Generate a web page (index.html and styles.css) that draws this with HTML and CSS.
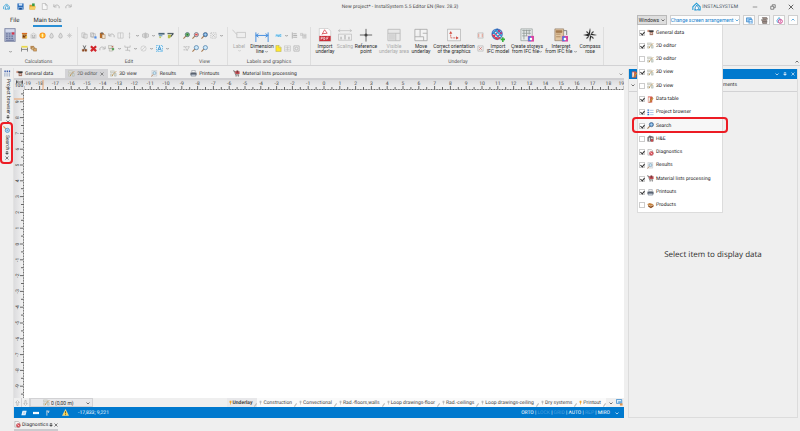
FILE: index.html
```html
<!DOCTYPE html>
<html lang="en">
<head>
<meta charset="utf-8">
<title>New project* - InstalSystem 5.5 Editor EN (Rev. 28.3)</title>
<link rel="stylesheet" href="styles.css">
</head>
<body>
<svg class="defs" aria-hidden="true">
  <symbol id="logo" viewBox="0 0 16 16"><path d="M1.500 14V8.500L8 2l6.500 6.500V14H11M4 14h3" fill="none" stroke="#1b9ad6" stroke-width="1.800"/><path d="M8.500 5.500C11 9 11.500 10 11.500 11.300a3 3 0 0 1-6 0C5.500 10 7 8 8.500 5.500z" fill="#fff" stroke="#1b86c8" stroke-width="1.600"/></symbol>
  <symbol id="save" viewBox="0 0 16 16"><path d="M1 1h14v14H1z" fill="#2568b8"/><path d="M4 1h8v5H4z" fill="#cfe3f8"/><path d="M3 9h10v6H3z" fill="#8eb5e0"/><path d="M5 11h6v4H5z" fill="#174a8c"/></symbol>
  <symbol id="open" viewBox="0 0 16 16"><path d="M1 4h5l1 2h7v9H1z" fill="#d99a2b"/><path d="M3 8h13l-3 7H1z" fill="#f7cf62"/><path d="M7 1h6v6H7z" fill="#3d9b45"/></symbol>
  <symbol id="page" viewBox="0 0 16 16"><path d="M3 1h7l4 4v10H3zM10 1v4h4" fill="#f8f8f8" stroke="#aaa" stroke-width="1.300"/></symbol>
  <symbol id="undo" viewBox="0 0 16 16"><path d="M2 3v6h6M2.500 8.500C5 4 12 3 14 8v4" fill="none" stroke="#b5b5b5" stroke-width="2.200"/></symbol>
  <symbol id="redo" viewBox="0 0 16 16"><path d="M14 3v6H8M13.500 8.500C11 4 4 3 2 8v4" fill="none" stroke="#b5b5b5" stroke-width="2.200"/></symbol>
  <symbol id="calc" viewBox="0 0 26 32"><path d="M1 1h24v30H1z" fill="#a9b2cc" stroke="#747d9c" stroke-width="1.500"/><path d="M3 3h20v6H3z" fill="#d3d9ec"/><path d="M4 12h4v3H4zm6 0h4v3h-4zM4 17h4v3H4zm6 0h4v3h-4zm6 0h4v3h-4zM4 22h4v3H4zm6 0h4v3h-4zm6 0h4v3h-4zM4 27h18v2H4z" fill="#69749c"/><path d="M17 10h6v5h-6z" fill="#d8344a"/></symbol>
  <symbol id="boiler" viewBox="0 0 16 16"><path d="M2 2h12v3H2z" fill="#d86a22"/><path d="M3 5h10v10H3z" fill="#b87d2c"/><path d="M5 7l3 3 4-4v6H4z" fill="#6b2e16"/><path d="M10 9h4v5h-4z" fill="#edc14a"/></symbol>
  <symbol id="house" viewBox="0 0 16 16"><path d="M2 14V6l6-4 6 4v8z" fill="#e3e3e3" stroke="#bbb"/><path d="M4 7h3v3H4zm5 0h3v3H9zM5 11h6v3H5z" fill="#b5b5b5"/></symbol>
  <symbol id="sun" viewBox="0 0 16 16"><circle cx="8" cy="8" r="7" fill="#f8931e"/><circle cx="8" cy="8" r="4.500" fill="#ffcc43"/><path d="M7 4h2v8H7z" fill="#fff3cf"/></symbol>
  <symbol id="drop" viewBox="0 0 16 16"><path d="M8 2c3 4 4 6 4 8a4 4 0 0 1-8 0c0-2 2-4 4-8z" fill="#ddd" stroke="#aaa" stroke-width="1.500"/></symbol>
  <symbol id="snow" viewBox="0 0 16 16"><path d="M8 2v12M2 8h12M4 4l8 8M12 4l-8 8" stroke="#c3c3c3" stroke-width="1.500"/></symbol>
  <symbol id="radiator" viewBox="0 0 16 16"><path d="M1 2h14v4H1z" fill="#e9d84a"/><path d="M1 6v9M15 6v9M1 10h14" stroke="#777" stroke-width="2"/></symbol>
  <symbol id="stack" viewBox="0 0 16 16"><path d="M1 2h8v7H1z" fill="#b98a55"/><path d="M4 5h7v6H4z" fill="#e3c089" stroke="#8f6437"/><path d="M8 8h7v6H8z" fill="#d9a461" stroke="#8f6437"/></symbol>
  <symbol id="copy" viewBox="0 0 16 16"><path d="M2 2h7v10H2zM6 5h8v9H6z" fill="#eee" stroke="#b0b0b0" stroke-width="1.400"/></symbol>
  <symbol id="copyb" viewBox="0 0 16 16"><path d="M1 2h7v9H1zM4 4h8v8H4z" fill="#eee" stroke="#a9a9a9" stroke-width="1.400"/><path d="M10 10h5v5h-5z" fill="#4f8de8"/></symbol>
  <symbol id="paste" viewBox="0 0 16 16"><path d="M2 2h9v12H2z" fill="#b96d28"/><path d="M4 1h5v3H4z" fill="#666"/><path d="M7 6h7v9H7z" fill="#f4e5cf" stroke="#8c6b4a"/></symbol>
  <symbol id="split" viewBox="0 0 16 16"><path d="M2 2h12v12H2zM8 2v12" fill="none" stroke="#c0c0c0" stroke-width="1.500"/></symbol>
  <symbol id="vline" viewBox="0 0 16 16"><path d="M8 1v14M6 5l2-2 2 2M6 11l2 2 2-2" fill="none" stroke="#b5b5b5" stroke-width="1.300"/></symbol>
  <symbol id="mirror" viewBox="0 0 16 16"><path d="M6 3L1 5v6l5 2zM10 3l5 2v6l-5 2z" fill="#ddd" stroke="#999"/><path d="M8 1v14" stroke="#aaa" stroke-width="1.500"/></symbol>
  <symbol id="brush" viewBox="0 0 16 16"><path d="M1 2h14v4H1z" fill="#4d6778"/><path d="M2 6h8v4H2z" fill="#7ea7c2"/><path d="M3 10h4v4H3z" fill="#c0cb63"/></symbol>
  <symbol id="brush2" viewBox="0 0 16 16"><path d="M1 2h14v3H1z" fill="#59666b"/><path d="M14 4L8 11" stroke="#39444b" stroke-width="2.500"/><path d="M2 6h8l-3 8H2z" fill="#b8bd4b"/></symbol>
  <symbol id="cut" viewBox="0 0 16 16"><path d="M5 1l5 10M11 1L6 11" stroke="#4b4b4b" stroke-width="1.800"/><path d="M3 10h4v4H3zm6 0h4v4H9z" fill="#8a461e" stroke="#8a461e"/></symbol>
  <symbol id="delete" viewBox="0 0 16 16"><path d="M2 3l12 11M14 3L2 14" stroke="#d1252b" stroke-width="5"/></symbol>
  <symbol id="layers" viewBox="0 0 16 16"><path d="M1 1h8v7H1zM3 8h7v6H3z" fill="#e6e6d8" stroke="#9a9a9a"/><path d="M9 7h5v5H9z" fill="#59a05a"/><path d="M8 4l4-3v6z" fill="#b86a52"/></symbol>
  <symbol id="align" viewBox="0 0 16 16"><path d="M2 1v4h12V1M8 5v7M3 12h10v3" fill="none" stroke="#ababab" stroke-width="1.500"/></symbol>
  <symbol id="slash" viewBox="0 0 16 16"><circle cx="8" cy="8" r="6" fill="none" stroke="#c4c4c4" stroke-width="1.500"/><path d="M4 12l8-8" stroke="#c4c4c4" stroke-width="1.500"/></symbol>
  <symbol id="select-a" viewBox="0 0 16 16"><path d="M1 1h14v14H1z" fill="#e3f3fd" stroke="#3ca4dd" stroke-width="1.600" stroke-dasharray="3 2"/><path d="M4 13l4-10 4 10M6 10h4" fill="none" stroke="#217fc0" stroke-width="1.800"/></symbol>
  <symbol id="zoom-green" viewBox="0 0 16 16"><path d="M7 9l-6 6" stroke="#a77a51" stroke-width="2.500"/><circle cx="10" cy="6" r="4.800" fill="#77bd69" stroke="#49677d" stroke-width="1.600"/><path d="M8 6h4M10 4v4" stroke="#14652d" stroke-width="1.500"/></symbol>
  <symbol id="zoom-red" viewBox="0 0 16 16"><path d="M7 9l-6 6" stroke="#a77a51" stroke-width="2.500"/><circle cx="10" cy="6" r="4.800" fill="#f3b5ad" stroke="#576d86" stroke-width="1.600"/><path d="M7.500 6h5" stroke="#d5252f" stroke-width="2"/></symbol>
  <symbol id="zoom-blue" viewBox="0 0 16 16"><path d="M7 9l-6 6" stroke="#a77a51" stroke-width="2.500"/><circle cx="10" cy="6" r="4.800" fill="#cbe8fb" stroke="#5180a8" stroke-width="1.700"/></symbol>
  <symbol id="zoom-dark" viewBox="0 0 16 16"><path d="M7 9l-6 6" stroke="#a77a51" stroke-width="2.500"/><circle cx="10" cy="6" r="4.800" fill="#5495cf" stroke="#4d6685" stroke-width="1.600"/><path d="M10 3v6M7 6h6" stroke="#eaf5ff"/></symbol>
  <symbol id="zoom-v" viewBox="0 0 16 16"><path d="M7 7L1 1" stroke="#e09a4a" stroke-width="2.500"/><circle cx="10" cy="10" r="4.800" fill="#bfe0f7" stroke="#4c8ac0" stroke-width="1.800"/><path d="M10 8v4M8 10h4" stroke="#3c7cb8"/></symbol>
  <symbol id="frame" viewBox="0 0 16 16"><path d="M2 2h12v12H2z" fill="none" stroke="#b0b0b0" stroke-width="1.600" stroke-dasharray="3 2"/><path d="M5 5l6 6M11 5l-6 6" stroke="#b0b0b0" stroke-width="1.300"/></symbol>
  <symbol id="scissor-g" viewBox="0 0 16 16"><path d="M1 4h14M1 11h6M9 13l5-8M5 5l5 8" fill="none" stroke="#aaa" stroke-width="1.600" stroke-dasharray="4 1"/></symbol>
  <symbol id="label" viewBox="0 0 32 32"><path d="M1 4l10 11M11 10h20v12H11z" fill="#eee" stroke="#b8b8b8" stroke-width="1.500"/></symbol>
  <symbol id="dimension" viewBox="0 0 32 32"><path d="M2 10v22M30 10v22M2 17h28M8 13l-6 4 6 4M24 13l6 4-6 4" fill="none" stroke="#458fdf" stroke-width="2.200"/></symbol>
  <symbol id="abc" viewBox="0 0 16 16"><path d="M1 5h14v6H1z" fill="#bfe5fa"/><path d="M2 10l2-4 2 4M7 6v4h2V7M14 6h-3v4h3" fill="none" stroke="#319fd7" stroke-width="1.200"/></symbol>
  <symbol id="list-g" viewBox="0 0 16 16"><path d="M3 1v14M5 4h8M5 8h9M5 12h9" stroke="#aaa" stroke-width="2"/></symbol>
  <symbol id="doc-g" viewBox="0 0 16 16"><path d="M1 3h5v5H1zM6 5h8v9H6z" fill="#ddd" stroke="#bbb"/><path d="M8 8h5M8 11h5" stroke="#aaa"/></symbol>
  <symbol id="note" viewBox="0 0 16 16"><path d="M2 1h7l5 5v9H2z" fill="#ffe72d" stroke="#a3a05a"/><path d="M9 1v5h5" fill="#fff8a2" stroke="#a3a05a"/></symbol>
  <symbol id="table-g" viewBox="0 0 16 16"><path d="M1 2h14v12H1zM3 6h10M3 10h10M8 3v10" fill="#eee" stroke="#bbb" stroke-width="1.300"/></symbol>
  <symbol id="pic-g" viewBox="0 0 16 16"><path d="M2 2h12v12H2z" fill="#eee" stroke="#aaa" stroke-width="1.500"/><circle cx="8" cy="8" r="3" fill="none" stroke="#aaa" stroke-width="1.500"/></symbol>
  <symbol id="pdf" viewBox="0 0 32 32"><path d="M3 1h20l6 6v24H3z" fill="#fff" stroke="#aaa"/><path d="M3 18h26v12H3z" fill="#c92d38"/><path d="M9 15l6-11 6 8-11 1" fill="none" stroke="#d8434c" stroke-width="1.800"/><path d="M7 27v-6h3v3H7M13 21v6l3-1v-4zM20 27v-6h4M20 24h3" fill="none" stroke="#fff" stroke-width="1.300"/></symbol>
  <symbol id="scaling" viewBox="0 0 32 32"><path d="M1 6h30M5 3L1 6l4 3M27 3l4 3-4 3M1 14h30v14H1z" fill="none" stroke="#b7b7b7" stroke-width="1.500"/><path d="M5 20h4v6H5zm9-4h4v10h-4zm9 4h4v6h-4z" fill="#c6c6c6"/></symbol>
  <symbol id="refpoint" viewBox="0 0 32 32"><path d="M16 2v29M2 16h28" stroke="#555" stroke-width="2"/><circle cx="16" cy="16" r="3.500" fill="#444"/></symbol>
  <symbol id="visible" viewBox="0 0 32 32"><path d="M2 3h28v26H2zM2 12h28M20 12v17" fill="#e8e8e8" stroke="#bcbcbc" stroke-width="2"/><path d="M4 14h14v13H4z" fill="#d4d4d4"/></symbol>
  <symbol id="move" viewBox="0 0 32 32"><path d="M2 3h28v26H2zM2 20h12V3M20 12h10M14 20h8v9" fill="#f3f3f3" stroke="#a3a3a3" stroke-width="1.800"/></symbol>
  <symbol id="correct" viewBox="0 0 34 32"><path d="M1 2h32v28H1z" fill="#f3f3f3" stroke="#a3a3a3" stroke-width="1.500"/><path d="M9 8v15h18" fill="none" stroke="#d35248" stroke-width="2" stroke-dasharray="5 2"/><path d="M5 13l4-6 4 6zM22 19l6 4-6 4z" fill="#d35248"/></symbol>
  <symbol id="fit" viewBox="0 0 16 16"><path d="M2 2h12v12H2z" fill="#eee" stroke="#9a9a9a"/><path d="M4 4v8M12 4v8" stroke="#e69384" stroke-width="2"/></symbol>
  <symbol id="fitx" viewBox="0 0 16 16"><path d="M2 2h12v12H2z" fill="#eee" stroke="#9a9a9a"/><path d="M5 5l6 6M11 5l-6 6" stroke="#d0645b" stroke-width="1.500"/></symbol>
  <symbol id="ifc" viewBox="0 0 32 32"><g fill="none" stroke-width="3"><circle cx="14" cy="14" r="11.500" stroke="#4a7cc6"/><path d="M3 14L14 3l11 11" stroke="#2c5eb0"/><path d="M5 20L20 5M10 25L25 10" stroke="#db2b70"/><path d="M5 9l16 15M10 4l14 15" stroke="#2b9bd7"/><path d="M3 15l11 11 7-5" stroke="#d8394d"/></g><path d="M27 21v11M22 26h10" stroke="#35ae3a" stroke-width="3.500"/></symbol>
  <symbol id="storeys" viewBox="0 0 32 32"><path d="M2 2h26v27H2z" fill="#e8eceb" stroke="#8c9792" stroke-width="1.500"/><path d="M5 6h20M5 12h20M5 18h12M9 4v22M15 4v14M21 4v11" stroke="#8d9894" stroke-width="1.800"/><path d="M18 18h14v13H18z" fill="#d846a2"/><path d="M19 19h6v11h-6z" fill="#427ee0"/><circle cx="25" cy="25" r="3" fill="#fff"/></symbol>
  <symbol id="interpret" viewBox="0 0 32 32"><path d="M2 2h20v27H2z" fill="#e2c5a0" stroke="#8c7961" stroke-width="1.500"/><path d="M5 6h13v4H5zM5 14h10M5 20h10" fill="#aa7e50" stroke="#9a7248" stroke-width="1.500"/><path d="M22 6h7v10" fill="none" stroke="#777" stroke-width="2"/><path d="M18 18h14v13H18z" fill="#d846a2"/><path d="M19 19h6v11h-6z" fill="#427ee0"/><circle cx="25" cy="25" r="3" fill="#fff"/></symbol>
  <symbol id="compass" viewBox="0 0 32 32"><path d="M16 0l3 13 13 3-13 3-3 13-3-13-13-3 13-3z" fill="#222"/><path d="M8 8l16 16M24 8L8 24" stroke="#444" stroke-width="2.500"/><path d="M16 16l3-3L16 2zM16 16l3 3 11-3zM16 16l-3 3 3 11z" fill="#d5d5d5"/></symbol>
  <symbol id="pencil-tree" viewBox="0 0 16 16"><path d="M1 2h9v4H1zM1 9h4v5H1z" fill="#e1e2da" stroke="#aeb0a5"/><path d="M14 3L7 10l-2 4" fill="none" stroke="#bb9350" stroke-width="2"/><path d="M10 8h4v6h-4z" fill="#d8dfd9" stroke="#9aa69d"/></symbol>
  <symbol id="general" viewBox="0 0 16 16"><path d="M1 2h5v5H1z" fill="#c78e7a"/><path d="M5 3h10v4H5z" fill="#373737"/><path d="M6 7h8v7H6z" fill="#a67868"/><path d="M8 9h4v2H8z" fill="#e5d9d4"/></symbol>
  <symbol id="datatable" viewBox="0 0 16 16"><path d="M2 1h10v14H2z" fill="#d85c50"/><path d="M3 3h4v11H3z" fill="#f2eee8"/><path d="M14 5l-5 8-3 2 1-4 5-8z" fill="#e6a03c" stroke="#8d5b35"/></symbol>
  <symbol id="browser" viewBox="0 0 16 16"><path d="M1 1h4v3H1zm0 5h4v3H1zm0 5h4v3H1z" fill="#3776c9"/><path d="M7 3h8M7 8h8M7 13h8" stroke="#9ab9df" stroke-width="1.800"/></symbol>
  <symbol id="browser-v" viewBox="0 0 16 16"><path d="M1 1h3v4H1zm5 0h3v4H6zm5 0h3v4h-3z" fill="#3457a8"/><path d="M2 7v8M7 7v8M12 7v8" stroke="#8298bd" stroke-width="1.800"/></symbol>
  <symbol id="he" viewBox="0 0 16 16"><path d="M1 5l5-4 9 3v11H1z" fill="#6c686b"/><path d="M4 6h3v8H4zm5 0h4v3H9z" fill="#ddd"/><path d="M9 10h5v5H9z" fill="#c9484c"/></symbol>
  <symbol id="diag" viewBox="0 0 16 16"><path d="M2 1h8l3 3v10H2z" fill="#f7f7f7" stroke="#888"/><circle cx="10" cy="10" r="4.500" fill="#de5861" stroke="#a83942"/><path d="M8 8l4 4" stroke="#fff" stroke-width="1.500"/></symbol>
  <symbol id="results" viewBox="0 0 16 16"><path d="M2 1h11v13H2z" fill="#e9edf0" stroke="#b7bcc1"/><circle cx="8" cy="7" r="3.500" fill="#c8e6f7" stroke="#7597ac" stroke-width="1.300"/><path d="M5 10l-4 5" stroke="#b98764" stroke-width="2"/></symbol>
  <symbol id="cart" viewBox="0 0 16 16"><path d="M0 2h3l3 9h8" fill="none" stroke="#555" stroke-width="1.600"/><path d="M4 3h11v6H6z" fill="#bd4c52"/><path d="M6 12h2v3H6zm5 0h2v3h-2z" fill="#555"/><path d="M8 1h4v5H8z" fill="#7c3438"/></symbol>
  <symbol id="printer" viewBox="0 0 16 16"><path d="M4 1h8v5H4z" fill="#f3f3f3" stroke="#747b88"/><path d="M1 6h14v6H1z" fill="#596270"/><path d="M3 10h10v4H3z" fill="#ced6e2" stroke="#596270"/></symbol>
  <symbol id="products" viewBox="0 0 16 16"><path d="M0 5l6-3 9 3-6 4z" fill="#c5833e"/><path d="M2 7l7 3 6-4v4l-6 4-6-3z" fill="#8e4e1d"/></symbol>
  <symbol id="chev" viewBox="0 0 8 8"><path d="M1 3l3 3 3-3" fill="none" stroke="currentColor" stroke-width="1.300"/></symbol>
  <symbol id="close" viewBox="0 0 8 8"><path d="M1 1l6 6M7 1L1 7" stroke="currentColor" stroke-width="1.200"/></symbol>
  <symbol id="pin" viewBox="0 0 8 8"><path d="M2.500 1h3v4h-3zM1 5h6M4 5v3" fill="none" stroke="currentColor" stroke-width="1.100"/></symbol>
  <symbol id="monitor" viewBox="0 0 16 16"><path d="M1 2h11v9H1z" fill="#9fcdf2" stroke="#2677bd" stroke-width="1.500"/><path d="M6 5h9v10H6z" fill="#4b96d8"/><path d="M8 7h5v3H8zM8 12h5v3H8z" fill="#e8f4ff"/></symbol>
  <symbol id="books" viewBox="0 0 16 16"><path d="M3 1h10l2 4H5zM1 6h11l2 4H3zM3 11h10v4H4z" fill="#a7958d" stroke="#655c58" stroke-width="1.300"/></symbol>
  <symbol id="drops" viewBox="0 0 16 16"><path d="M7 1l4 6-2 6-6-1-1-4z" fill="#d9effc" stroke="#2895cf" stroke-width="1.500"/><circle cx="10" cy="10" r="4.500" fill="#fff" stroke="#cd3688" stroke-width="2"/><path d="M10 7v6" stroke="#cd3688" stroke-width="1.500"/></symbol>
  <symbol id="bulb" viewBox="0 0 8 12"><path d="M2 1h4l1 4-2 2v4H3V7L1 5z" fill="currentColor"/></symbol>
  <symbol id="arrow" viewBox="0 0 8 10"><path d="M4 1l3 3H5v5H3V4H1z" fill="#fff" stroke="#999" stroke-width=".9"/></symbol>
  <symbol id="warn" viewBox="0 0 16 16"><path d="M8 1l7 14H1z" fill="#ffd24c" stroke="#fff0b5"/><path d="M8 5v5M8 12v2" stroke="#5b430b" stroke-width="1.800"/></symbol>
  <symbol id="st-page" viewBox="0 0 16 16"><path d="M4 2h11l-3 12H1z" fill="#f0f7fd"/><path d="M6 6h6M5 10h6" stroke="#7db4df" stroke-width="1.500"/></symbol>
  <symbol id="st-bar" viewBox="0 0 16 16"><path d="M0 5h16v6H0z" fill="#fff"/><path d="M3 8h10" stroke="#bfdcf2"/></symbol>
  <symbol id="st-key" viewBox="0 0 16 16"><path d="M5 1v14M5 3h4v5M9 3h3" fill="none" stroke="#c7d5df" stroke-width="2.500"/></symbol>
  <symbol id="screens" viewBox="0 0 16 16"><path d="M1 1h12v9H1z" fill="#d9efff" stroke="#3a87c8" stroke-width="1.800"/><path d="M5 5h9v6H5z" fill="#6faee0"/><path d="M9 10h6v5H9z" fill="#e0954d"/></symbol>
</svg>

<header>
  <div class="titlebar">
    <nav class="quick">
      <svg class="ic"><use href="#logo"/></svg>
      <button class="qb" aria-label="Save"><svg class="ic"><use href="#save"/></svg></button>
      <button class="qb" aria-label="Open"><svg class="ic"><use href="#open"/></svg></button>
      <button class="qb" aria-label="New"><svg class="ic"><use href="#page"/></svg></button>
      <button class="qb" aria-label="Undo"><svg class="ic"><use href="#undo"/></svg></button>
      <button class="qb" aria-label="Redo"><svg class="ic"><use href="#redo"/></svg></button>
    </nav>
    <h1>New project* - InstalSystem 5.5 Editor EN (Rev. 28.3)</h1>
    <div class="winbar">
      <svg class="brand-logo"><use href="#logo"/></svg><span class="brand">INSTALSYSTEM</span>
      <button aria-label="Minimize"><svg viewBox="0 0 8 8"><path d="M1 4h6" stroke="#777"/></svg></button>
      <button aria-label="Restore"><svg viewBox="0 0 8 8"><path d="M1 3h4v4H1zM3 3V1h4v4H5" fill="none" stroke="#666"/></svg></button>
      <button aria-label="Close"><svg><use href="#close"/></svg></button>
    </div>
  </div>

  <div class="tabrow">
    <a class="rtab" href="#file">File</a>
    <a class="rtab on" href="#main">Main tools</a>
    <div class="rowtools">
      <div class="menu-wrap">
        <button class="drop grey">Windows <svg class="cv"><use href="#chev"/></svg></button>
        <div class="menu">
          <label><input type="checkbox" checked><svg class="ic"><use href="#general"/></svg>General data</label>
          <label><input type="checkbox" checked><svg class="ic"><use href="#pencil-tree"/></svg>2D editor</label>
          <label><input type="checkbox"><svg class="ic"><use href="#pencil-tree"/></svg>2D editor</label>
          <label><input type="checkbox" checked><svg class="ic"><use href="#pencil-tree"/></svg>3D view</label>
          <label><input type="checkbox"><svg class="ic"><use href="#pencil-tree"/></svg>3D view</label>
          <label><input type="checkbox" checked><svg class="ic"><use href="#datatable"/></svg>Data table</label>
          <label><input type="checkbox" checked><svg class="ic"><use href="#browser"/></svg>Project browser</label>
          <label class="hot"><input type="checkbox" checked><svg class="ic"><use href="#zoom-dark"/></svg>Search</label>
          <label><input type="checkbox"><svg class="ic"><use href="#he"/></svg>H&amp;E</label>
          <label><input type="checkbox" checked><svg class="ic"><use href="#diag"/></svg>Diagnostics</label>
          <label><input type="checkbox" checked><svg class="ic"><use href="#results"/></svg>Results</label>
          <label><input type="checkbox" checked><svg class="ic"><use href="#cart"/></svg>Material lists processing</label>
          <label><input type="checkbox" checked><svg class="ic"><use href="#printer"/></svg>Printouts</label>
          <label><input type="checkbox"><svg class="ic"><use href="#products"/></svg>Products</label>
        </div>
      </div>
      <button class="drop blue">Change screen arrangement <svg class="cv"><use href="#chev"/></svg></button>
      <button class="sq" aria-label="Screens"><svg class="ic"><use href="#monitor"/></svg></button>
      <button class="sq" aria-label="Catalogues"><svg class="ic"><use href="#books"/></svg></button>
      <button class="sq" aria-label="Media"><svg class="ic"><use href="#drops"/></svg></button>
      <button class="sq last" aria-label="Collapse"><svg class="cv up"><use href="#chev"/></svg></button>
    </div>
  </div>

  <div class="ribbon">
    <section class="group g-calc">
      <div class="tools">
        <button class="tool w20" aria-label="Calculate"><svg class="big"><use href="#calc"/></svg><svg class="cv low"><use href="#chev"/></svg></button>
        <div class="small">
          <div><svg><use href="#boiler"/></svg><svg><use href="#house"/></svg><svg><use href="#sun"/></svg><svg><use href="#drop"/></svg><svg><use href="#drop"/></svg><svg><use href="#snow"/></svg></div>
          <div><svg><use href="#radiator"/></svg><svg><use href="#stack"/></svg></div>
        </div>
      </div>
      <h2>Calculations</h2>
    </section>
    <section class="group g-edit">
      <div class="tools">
        <div class="small">
          <div><svg><use href="#copy"/></svg><svg><use href="#copyb"/></svg><svg><use href="#paste"/></svg><svg><use href="#undo"/></svg><svg><use href="#split"/></svg><svg><use href="#vline"/></svg><svg class="c"><use href="#chev"/></svg><svg><use href="#mirror"/></svg><svg class="c"><use href="#chev"/></svg><svg><use href="#brush"/></svg><svg><use href="#brush2"/></svg></div>
          <div><svg><use href="#cut"/></svg><svg><use href="#delete"/></svg><svg><use href="#redo"/></svg><svg><use href="#layers"/></svg><svg class="c"><use href="#chev"/></svg><svg><use href="#align"/></svg><svg class="c"><use href="#chev"/></svg><svg><use href="#slash"/></svg><svg class="c"><use href="#chev"/></svg><svg><use href="#select-a"/></svg><svg class="c"><use href="#chev"/></svg></div>
        </div>
      </div>
      <h2>Edit</h2>
    </section>
    <section class="group g-view">
      <div class="tools">
        <div class="small">
          <div><svg><use href="#zoom-green"/></svg><svg><use href="#zoom-red"/></svg><svg><use href="#zoom-dark"/></svg><svg><use href="#frame"/></svg><svg class="c"><use href="#chev"/></svg></div>
          <div><svg><use href="#scissor-g"/></svg><svg><use href="#zoom-blue"/></svg><svg><use href="#zoom-blue"/></svg></div>
        </div>
      </div>
      <h2>View</h2>
    </section>
    <section class="group g-label">
      <div class="tools">
        <button class="tool w22 off"><svg class="big"><use href="#label"/></svg><span>Label</span><svg class="cv"><use href="#chev"/></svg></button>
        <button class="tool w24"><svg class="big"><use href="#dimension"/></svg><span>Dimension<br>line <svg class="cv"><use href="#chev"/></svg></span></button>
        <div class="small">
          <div><svg><use href="#abc"/></svg><svg class="c"><use href="#chev"/></svg><svg><use href="#list-g"/></svg><svg><use href="#doc-g"/></svg></div>
          <div><svg><use href="#note"/></svg><svg><use href="#table-g"/></svg><svg><use href="#pic-g"/></svg></div>
        </div>
      </div>
      <h2>Labels and graphics</h2>
    </section>
    <section class="group g-under">
      <div class="tools">
        <button class="tool w24"><svg class="big"><use href="#pdf"/></svg><span>Import<br>underlay</span></button>
        <button class="tool w16 off"><svg class="big"><use href="#scaling"/></svg><span>Scaling</span></button>
        <button class="tool w26"><svg class="big"><use href="#refpoint"/></svg><span>Reference<br>point</span></button>
        <button class="tool w30 off"><svg class="big"><use href="#visible"/></svg><span>Visible<br>underlay area</span></button>
        <button class="tool w24"><svg class="big"><use href="#move"/></svg><span>Move<br>underlay</span></button>
        <button class="tool w42"><svg class="big"><use href="#correct"/></svg><span>Correct orientation<br>of the graphics</span></button>
        <div class="small one"><div><svg><use href="#fit"/></svg></div><div><svg><use href="#fitx"/></svg></div></div>
        <button class="tool w24"><svg class="big"><use href="#ifc"/></svg><span>Import<br>IFC model</span></button>
        <button class="tool w34"><svg class="big"><use href="#storeys"/></svg><span>Create storeys<br>from IFC file<svg class="cv"><use href="#chev"/></svg></span></button>
        <button class="tool w34"><svg class="big"><use href="#interpret"/></svg><span>Interpret<br>from IFC file <svg class="cv"><use href="#chev"/></svg></span></button>
        <button class="tool w24"><svg class="big"><use href="#compass"/></svg><span>Compass<br>rose</span></button>
      </div>
      <h2>Underlay</h2>
    </section>
    <svg class="cv up ribbon-fold"><use href="#chev"/></svg>
  </div>
</header>

<main>
  <aside class="side">
    <div class="vtab first"><svg class="ic"><use href="#browser-v"/></svg><span>Project browser</span><svg class="mini"><use href="#pin"/></svg><svg class="mini"><use href="#close"/></svg></div>
    <div class="vtab marked"><svg class="ic"><use href="#zoom-v"/></svg><span>Search</span><svg class="mini"><use href="#pin"/></svg><svg class="mini"><use href="#close"/></svg></div>
  </aside>

  <section class="editor">
    <nav class="doctabs">
      <a href="#general-data"><svg class="ic"><use href="#general"/></svg>General data</a>
      <a class="on" href="#2d"><svg class="ic"><use href="#pencil-tree"/></svg>2D editor<svg class="mini"><use href="#close"/></svg></a>
      <a href="#3d"><svg class="ic"><use href="#pencil-tree"/></svg>3D view</a>
      <a href="#res"><svg class="ic"><use href="#results"/></svg>Results</a>
      <a href="#prints"><svg class="ic"><use href="#printer"/></svg>Printouts</a>
      <a href="#mat"><svg class="ic"><use href="#cart"/></svg>Material lists processing</a>
      <svg class="cv end"><use href="#chev"/></svg>
    </nav>
    <div class="drawing">
      <div class="corner"><svg viewBox="0 0 16 8"><path d="M1 0v8M15 0v8M1 4h14M4 1L1 4l3 3M12 1l3 3-3 3" fill="none" stroke="#333" stroke-width="1.500"/></svg><span>100</span></div>
      <svg class="ruler-h" id="ruler-h"></svg>
      <svg class="ruler-v" id="ruler-v"></svg>
      <div class="canvas"></div>
    </div>
    <div class="layers">
      <button class="lv" aria-label="Up"><svg><use href="#arrow"/></svg></button>
      <button class="lv down" aria-label="Down"><svg><use href="#arrow"/></svg></button>
      <div class="storey"><svg class="ic"><use href="#pencil-tree"/></svg><select aria-label="Storey"><option>0 (0,00 m)</option></select><svg class="cv"><use href="#chev"/></svg></div>
      <nav class="ltabs">
        <a class="on lit" href="#l1"><svg><use href="#bulb"/></svg>Underlay</a>
        <a href="#l2"><svg><use href="#bulb"/></svg>Construction</a>
        <a href="#l3"><svg><use href="#bulb"/></svg>Convectional</a>
        <a href="#l4"><svg><use href="#bulb"/></svg>Rad.-floors,walls</a>
        <a href="#l5"><svg><use href="#bulb"/></svg>Loop drawings-floor</a>
        <a href="#l6"><svg><use href="#bulb"/></svg>Rad.-ceilings</a>
        <a href="#l7"><svg><use href="#bulb"/></svg>Loop drawings-ceiling</a>
        <a href="#l8"><svg><use href="#bulb"/></svg>Dry systems</a>
        <a class="lit" href="#l9"><svg><use href="#bulb"/></svg>Printout</a>
      </nav>
      <svg class="cv"><use href="#chev"/></svg>
      <svg class="ic"><use href="#screens"/></svg>
    </div>
    <div class="status">
      <svg class="ic"><use href="#st-page"/></svg><svg class="ic"><use href="#st-bar"/></svg><svg class="ic"><use href="#st-key"/></svg><svg class="ic warn"><use href="#warn"/></svg>
      <span class="coords">-17,833; 9,221</span>
      <span class="modes">ORTO | <i>LOCK</i> | <i>GRID</i> | AUTO | <i>REP</i> | MIRO</span>
      <svg class="cv"><use href="#chev"/></svg>
    </div>
  </section>

  <aside class="panel">
    <div class="panel-head"><svg class="ic"><use href="#datatable"/></svg><span class="grip"></span><svg class="mini"><use href="#chev"/></svg><svg class="mini"><use href="#pin"/></svg><svg class="mini"><use href="#close"/></svg></div>
    <div class="panel-bar"><svg class="cv"><use href="#chev"/></svg><span>ments</span></div>
    <p>Select item to display data</p>
  </aside>
</main>

<footer>
  <div class="dock"><svg class="ic"><use href="#diag"/></svg>Diagnostics<svg class="mini"><use href="#pin"/></svg><svg class="mini"><use href="#close"/></svg></div>
</footer>
<script src="rulers.js"></script>
</body>
</html>
```
FILE: styles.css
```css
* { box-sizing: border-box; }

:root {
  --bg: #efefef;
  --line: #d2d2d4;
  --blue: #0079ce;
  --text: #2c2c2c;
}

body {
  margin: 0;
  min-height: 100vh;
  display: flex;
  flex-direction: column;
  background: var(--bg);
  color: var(--text);
  font: 5px/6px Roboto, "Open Sans", sans-serif;
  text-rendering: geometricPrecision;
  overflow: hidden;
}

button, select, input { font: inherit; color: inherit; margin: 0; padding: 0; border: 0; background: none; }
a { color: inherit; text-decoration: none; }
h1, h2, p { margin: 0; font: inherit; }
svg { display: block; flex: none; }

.defs { position: absolute; width: 0; height: 0; }
.ic { width: 7px; height: 7px; }
.cv { width: 4px; height: 4px; }
.mini { width: 4px; height: 4px; }
.up { transform: rotate(180deg); }

/* Title bar */
.titlebar { display: grid; grid-template-columns: 1fr auto 1fr; align-items: center; height: 13px; }
.quick { display: flex; align-items: center; padding-left: 3px; }
.qb { width: 12px; display: flex; justify-content: center; }
.quick > .ic { margin-right: 4px; }
.titlebar h1 { color: #4a4a4a; }
.winbar { display: flex; align-items: center; justify-content: flex-end; }
.brand-logo { width: 9px; height: 9px; margin-right: 1px; }
.brand { margin-right: 8px; color: #4b5a66; }
.winbar button { width: 18px; display: flex; justify-content: center; color: #555; }
.winbar button svg { width: 6px; height: 6px; }

/* Ribbon tabs */
.tabrow { display: flex; align-items: center; height: 14px; }
.rtab { height: 13px; padding: 4px 0 0; margin-left: 10px; border-bottom: 2px solid transparent; font-size: 6px; }
.rtab.on { margin-left: 14px; border-bottom-color: #2a8fd4; }
.rowtools { display: flex; gap: 3px; margin-left: auto; padding-right: 2px; }
.menu-wrap { position: relative; }
.drop, .sq { height: 10px; display: flex; align-items: center; justify-content: center; gap: 2px; border: 1px solid #cfcfcf; background: #fdfdfd; white-space: nowrap; }
.drop.grey { width: 30px; background: #dedede; border-color: #b9b9b9; }
.drop.blue { width: 70px; color: #1683cf; }
.sq { width: 12px; }
.sq.last { width: 10px; color: #1683cf; }

.menu {
  position: absolute;
  top: 10px;
  left: 0;
  z-index: 2;
  width: 86px;
  height: 188px;
  display: grid;
  grid-auto-rows: 1fr;
  padding-top: 1px;
  background: #fff;
  border: 1px solid #dcdcdc;
  border-top: 0;
}
.menu label { position: relative; display: flex; align-items: center; gap: 1px; padding-left: 1px; color: #222; }
.menu .ic { margin-right: 1px; }
.menu input { appearance: none; width: 6px; height: 6px; border: 1px solid #ccc; background: #fff; position: relative; margin-right: 1px; }
.menu input:checked::after { content: ""; position: absolute; left: 1px; top: 0; width: 2px; height: 3px; border: solid #333; border-width: 0 1px 1px 0; transform: rotate(40deg); }
.menu .hot { background: #f7f7f7; }
.menu .hot::after { content: ""; position: absolute; inset: -2px -6px -1px -6px; border: 2px solid #ec1c24; border-radius: 4px; }

/* Ribbon */
.ribbon { display: flex; height: 39px; border-bottom: 1px solid var(--line); position: relative; }
.group { display: flex; flex-direction: column; justify-content: space-between; border-right: 1px solid #dedede; padding: 1px 0 0; }
.g-calc { width: 78px; }
.g-edit { width: 101px; padding-left: 2px; }
.g-view { width: 49px; padding-left: 3px; }
.g-label { width: 83px; }
.g-under { width: 293px; padding-left: 2px; }
.group h2 { text-align: center; color: #555; }
.tools { display: flex; }
.tool { display: flex; flex-direction: column; align-items: center; line-height: 5px; white-space: nowrap; }
.tool .big { width: 14px; height: 14px; margin-bottom: 2px; }
.tool .cv { width: 3px; height: 3px; }
.tool span .cv { display: inline-block; vertical-align: middle; }
.tool .low { margin-top: 6px; }
.tool span { display: block; }
.off { color: #aaa; }
.w16 { width: 16px; } .w20 { width: 20px; } .w22 { width: 22px; } .w24 { width: 24px; }
.w26 { width: 26px; } .w30 { width: 30px; } .w34 { width: 34px; } .w42 { width: 42px; }
.small { display: flex; flex-direction: column; gap: 6px; padding-top: 4px; }
.small div { display: flex; gap: 2px; padding-left: 1px; }
.small svg { width: 7px; height: 7px; }
.small .c { width: 5px; padding: 1px; }
.one { width: 11px; padding-left: 1px; }
.ribbon-fold { position: absolute; right: 1px; bottom: 1px; }

/* Work area */
main { flex: 1; display: flex; min-height: 0; padding-top: 2px; }
.side { width: 14px; border-right: 1px solid #e2e2e2; }
.vtab { position: relative; writing-mode: vertical-rl; display: flex; align-items: center; gap: 1px; width: 13px; padding: 2px 0; white-space: nowrap; }
.vtab.first { height: 53px; border-left: 2px solid #c5c5c8; }
.vtab .ic { margin-bottom: 1px; }
.marked { margin-top: 1px; padding: 4px 0; height: 42px; }
.marked::after { content: ""; position: absolute; inset: 0; border: 2px solid #ec1c24; border-radius: 4px; }

.editor { flex: 1; min-width: 0; display: flex; flex-direction: column; }
.doctabs { display: flex; height: 11px; margin-top: 1px; border-bottom: 2px solid #cfcfd2; }
.doctabs a { display: flex; align-items: center; padding: 0 12px 0 2px; gap: 2px; white-space: nowrap; }
.doctabs .on { background: #d3d3d6; padding: 0 3px; color: #555; }
.doctabs .on .mini { margin: 0 1px; }
.end { margin: 3px 1px 0 auto; color: #777; }
.drawing { flex: 1; min-height: 0; display: grid; grid-template: 10px 1fr / 10px 1fr; }
.corner { display: flex; flex-direction: column; align-items: center; background: #e6e6e8; line-height: 5px; }
.corner svg { width: 7px; height: 4px; }
.ruler-h, .ruler-v { width: 100%; height: 100%; overflow: hidden; }
.ruler-h { background: linear-gradient(#dcdcde, #f3f3f3); }
.ruler-v { background: linear-gradient(90deg, #dcdcde, #f3f3f3); }
.tick { stroke: #666; stroke-width: 1; }
.pos { stroke: #e8a06a; stroke-width: 1; }
.num { font-size: 5px; fill: #444; text-anchor: middle; }
.num.from { text-anchor: start; }
.num.to { text-anchor: end; }
.canvas { background: #fff; }

.layers { display: flex; align-items: center; height: 9px; padding-right: 1px; }
.lv { width: 8px; height: 9px; display: flex; justify-content: center; align-items: center; border-right: 1px solid var(--line); }
.lv svg { width: 5px; height: 6px; }
.down svg { transform: rotate(180deg); }
.storey { width: 63px; height: 9px; display: flex; align-items: center; gap: 1px; padding: 0 2px 0 12px; background: #e8e8ea; border: 1px solid var(--line); }
.storey select { flex: 1; appearance: none; height: 7px; }
.ltabs { display: flex; margin-left: auto; }
.ltabs a { position: relative; display: flex; align-items: center; gap: 1px; height: 9px; padding: 0 5px 0 2px; background: #fafafa; color: #444; white-space: nowrap; }
.ltabs a::after { content: ""; position: absolute; right: 1px; top: 5px; width: 1px; height: 4px; background: #bbb; transform: rotate(35deg); }
.ltabs svg { width: 3px; height: 5px; color: #bbb; }
.ltabs .lit svg { color: #f2a52b; }
.ltabs .on { background: #e8e8ea; font-weight: 700; }
.layers > .cv { margin: 0 3px; }

.status { display: flex; align-items: center; height: 11px; background: var(--blue); color: #fff; padding: 0 5px 0 7px; }
.status .ic { width: 6px; height: 6px; margin-right: 6px; }
.status .warn { width: 7px; height: 7px; margin: 0 9px 0 5px; }
.modes { margin-left: auto; margin-right: 5px; white-space: nowrap; }
.modes i { font-style: normal; color: #4c9fdd; }

/* Data panel */
.panel { width: 170px; margin: 1px 2px 0 4px; border: 1px solid #dcdcdc; border-top: 0; display: flex; flex-direction: column; }
.panel-head { display: flex; align-items: center; gap: 4px; height: 10px; padding: 0 2px; background: var(--blue); color: #fff; }
.grip { flex: 1; height: 3px; background: radial-gradient(circle, #4aa3e0 30%, transparent 40%) 0 0 / 2px 2px; }
.panel-bar { display: flex; align-items: center; height: 13px; padding-left: 2px; border-bottom: 1px solid var(--line); }
.panel-bar span { margin-left: 88px; height: 7px; }
.panel p { margin: auto; font: 8px/10px "Open Sans", sans-serif; }

footer { height: 13px; padding: 2px 0 0 14px; display: flex; }
.dock { display: flex; align-items: center; gap: 1px; height: 11px; border-bottom: 2px solid #cbcbcf; white-space: nowrap; }
```
FILE: rulers.js
```js
const NS = "http://www.w3.org/2000/svg";
const STEP = 15.8; // pixels per metre

function add(parent, name, attrs, text) {
  const el = document.createElementNS(NS, name);
  for (const key in attrs) el.setAttribute(key, attrs[key]);
  if (text !== undefined) el.textContent = text;
  parent.appendChild(el);
  return el;
}

function tickLength(i) {
  if (i % 10 === 0) return 4;
  return i % 5 === 0 ? 3 : 1;
}

// The outermost numbers are anchored inwards so that they stay on the ruler.
function numClass(n) {
  if (n === -19) return "num from";
  return n === 19 ? "num to" : "num";
}

const across = add(document.getElementById("ruler-h"), "svg", { x: "50%", overflow: "visible" });
for (let i = -190; i <= 190; i++) {
  const x = i * STEP / 10;
  add(across, "line", { class: "tick", x1: x, x2: x, y1: 10 - tickLength(i), y2: 10 });
  if (i % 10 === 0) add(across, "text", { class: numClass(i / 10), x: x, y: 5 }, i / 10);
}
add(across, "line", { class: "pos", x1: -281, x2: -281, y1: 0, y2: 10 });

const down = add(document.getElementById("ruler-v"), "svg", { y: "50%", overflow: "visible" });
for (let i = -97; i <= 97; i++) {
  const y = -i * STEP / 10;
  add(down, "line", { class: "tick", x1: 10 - tickLength(i), x2: 10, y1: y, y2: y });
  if (i % 10 === 0) add(down, "text", { class: "num", transform: `translate(5 ${y}) rotate(-90)` }, i / 10);
}
add(down, "line", { class: "pos", x1: 0, x2: 10, y1: -145, y2: -145 });
```
